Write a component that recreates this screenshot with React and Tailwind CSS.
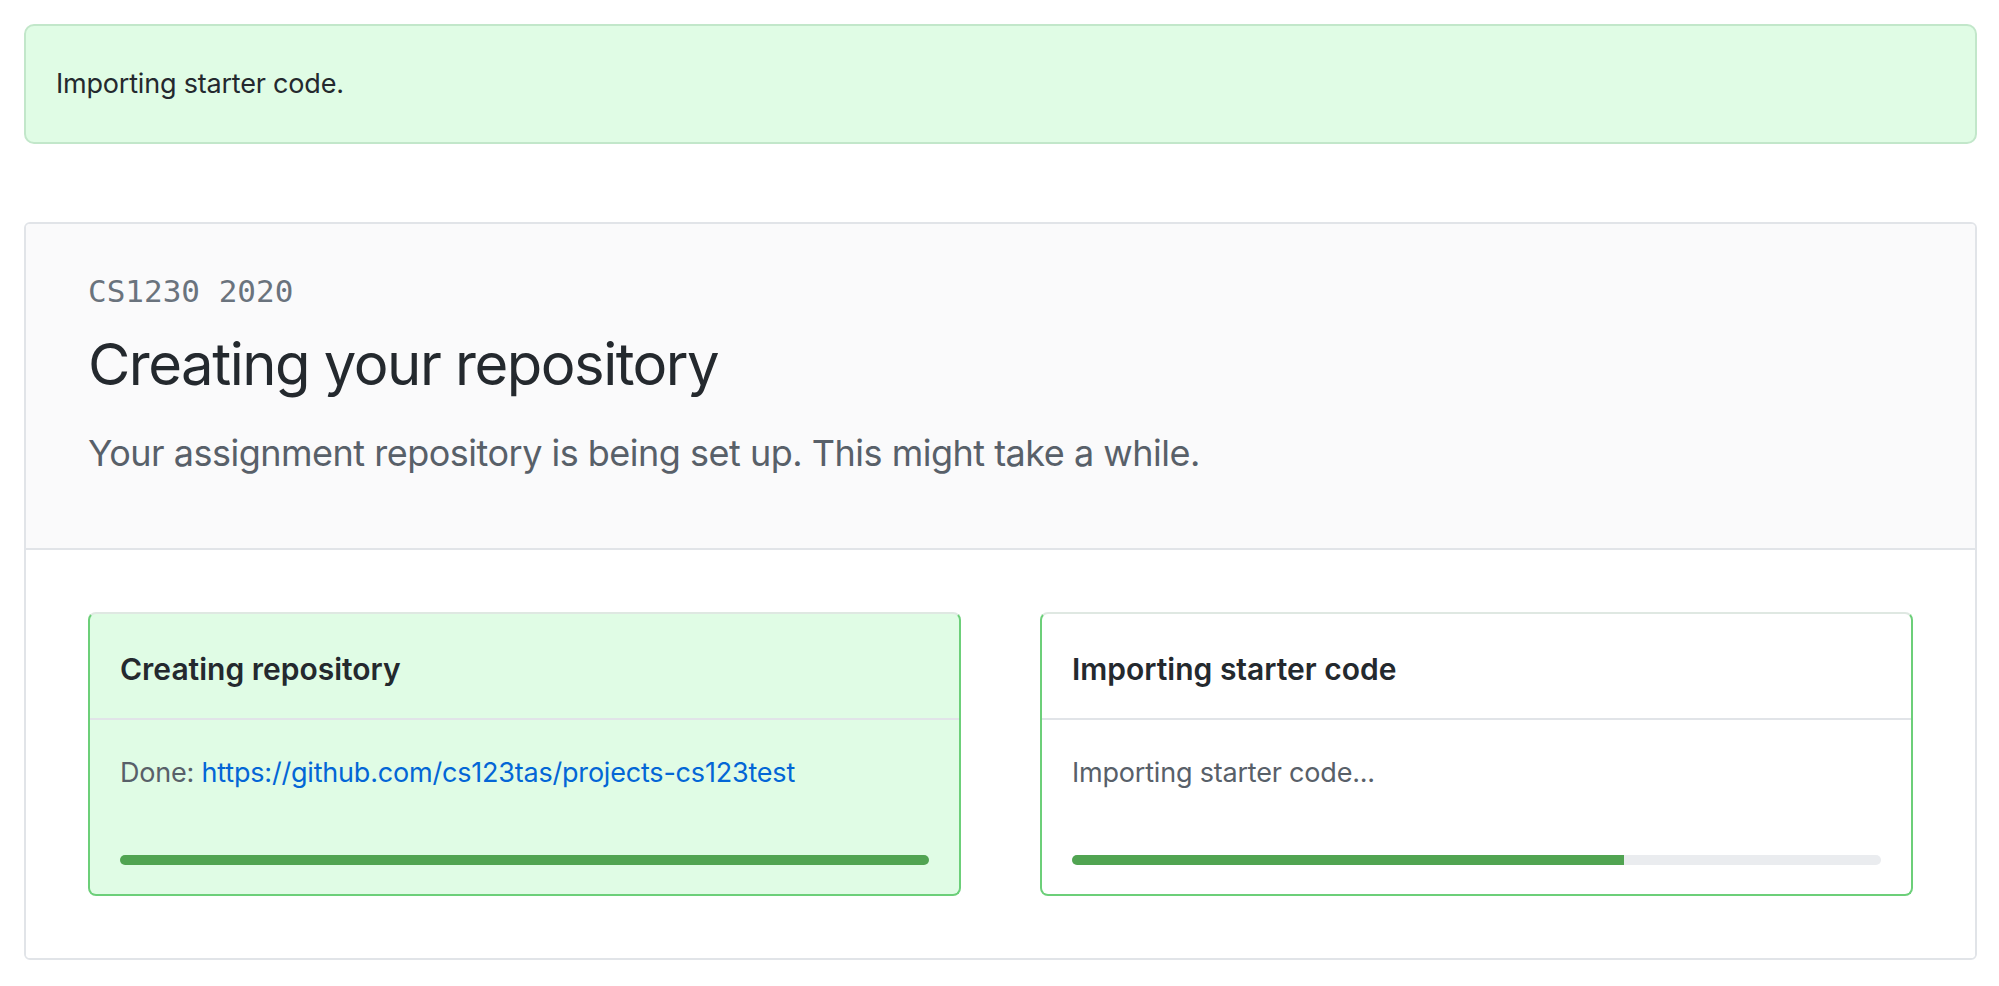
import React from "react";

function ProgressBar({ pct }) {
  return (
    <div className="h-[10px] w-full rounded-full bg-[#eaecef] overflow-hidden">
      <div className="h-full bg-[#51a452]" style={{ width: `${pct}%` }} />
    </div>
  );
}

function StepCard({ title, children, pct, done }) {
  return (
    <div
      className={`rounded-[8px] border-2 border-[#6ccf79] border-t-[#dfe8e2] ${
        done ? "bg-[#e0fce5]" : "bg-white"
      }`}
    >
      <div className="pl-[30px] pr-[30px] pt-[31px] pb-[25px] border-b-2 border-[#e1e4e8]">
        <div className="text-[30px] leading-[48px] font-semibold text-[#24292e]">{title}</div>
      </div>
      <div className="pl-[30px] pr-[30px] pt-[32px] pb-[29px]">
        <div className="text-[27px] leading-[42px] tracking-[-0.2px] text-[#586069]">{children}</div>
        <div className="mt-[61px]">
          <ProgressBar pct={pct} />
        </div>
      </div>
    </div>
  );
}

export default function App() {
  return (
    <div
      className="min-h-[986px] bg-white pt-[24px] pl-[24px]"
      style={{ fontFamily: "Inter, 'Noto Sans', 'Liberation Sans', sans-serif" }}
    >
      <div className="w-[1953px] h-[120px] flex items-center pl-[30px] rounded-[10px] border-2 border-[#c2e7ca] bg-[#e0fce5]">
        <span className="text-[27px] leading-[42px] tracking-[-0.2px] text-[#24292e]">
          Importing starter code.
        </span>
      </div>

      <div className="mt-[78px] w-[1953px] rounded-[6px] border-2 border-[#e1e4e8] overflow-hidden">
        <div className="bg-[#fafafb] border-b-2 border-[#e1e4e8] pl-[62px] pt-[47px] pb-[65px]">
          <div
            className="text-[31px] leading-[40px] text-[#6a737d]"
            style={{ fontFamily: "'DejaVu Sans Mono', 'Liberation Mono', monospace" }}
          >
            CS1230 2020
          </div>
          <h1 className="mt-[13px] text-[58px] leading-[80px] font-normal tracking-[-1.5px] text-[#24292e]">
            Creating your repository
          </h1>
          <p className="mt-[19px] text-[36px] leading-[60px] tracking-[-0.5px] text-[#586069]">
            Your assignment repository is being set up. This might take a while.
          </p>
        </div>

        <div className="bg-white px-[62px] pt-[62px] pb-[62px] grid grid-cols-2 gap-[79px]">
          <StepCard title="Creating repository" pct={100} done>
            Done:{" "}
            <a className="text-[#0366d6]" href="#">
              https://github.com/cs123tas/projects-cs123test
            </a>
          </StepCard>
          <StepCard title="Importing starter code" pct={68.2}>
            Importing starter code...
          </StepCard>
        </div>
      </div>
    </div>
  );
}
